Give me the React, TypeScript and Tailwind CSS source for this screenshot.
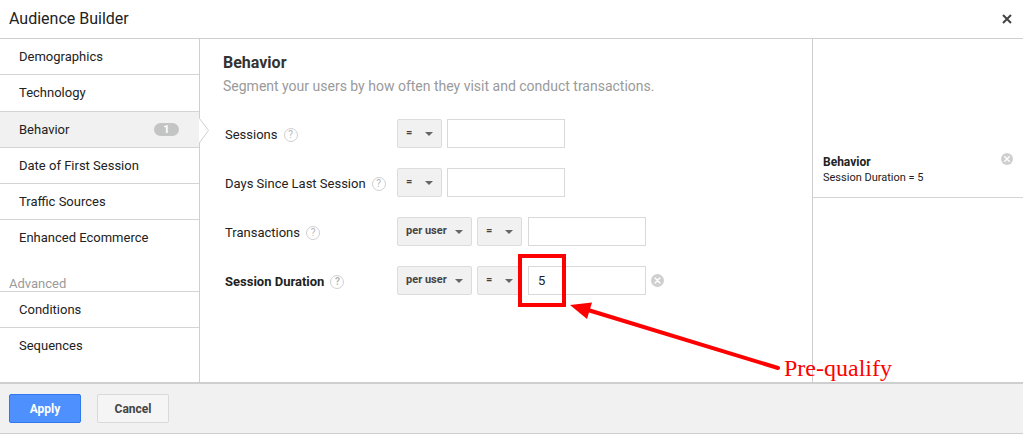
import React from "react";

const font = { fontFamily: "Roboto, 'Liberation Sans', Arial, sans-serif" };

function HelpIcon() {
  return (
    <span className="ml-[6px] inline-flex h-[14px] w-[14px] items-center justify-center rounded-full border border-[#d0d0d0] text-[10px] leading-none text-[#b5b5b5]">
      ?
    </span>
  );
}

function ClearIcon({ size = 13 }: { size?: number }) {
  return (
    <svg width={size} height={size} viewBox="0 0 14 14">
      <circle cx="7" cy="7" r="7" fill="#cfcfcf" />
      <path d="M4.4 4.4 L9.6 9.6 M9.6 4.4 L4.4 9.6" stroke="#fff" strokeWidth="1.6" strokeLinecap="round" />
    </svg>
  );
}

function Select({ label, wide }: { label: string; wide?: boolean }) {
  return (
    <div
      className={`flex h-[29px] items-center justify-between rounded-[2px] border border-[#dcdcdc] bg-[#f1f1f1] pl-[8px] pr-[8px] text-[11px] font-bold text-[#444] ${
        wide ? "w-[75px]" : "w-[45px]"
      }`}
    >
      <span>{label}</span>
      <svg width="8" height="4" viewBox="0 0 8 4">
        <path d="M0 0 L8 0 L4 4 Z" fill="#666" />
      </svg>
    </div>
  );
}

function TextBox({ value }: { value?: string }) {
  return (
    <div className="flex h-[29px] w-[118px] items-center border border-[#d9d9d9] bg-white pl-[9px] text-[13px] text-[#222]">
      {value}
    </div>
  );
}

type Row = { label: string; perUser?: boolean; bold?: boolean; value?: string; clear?: boolean };

const rows: Row[] = [
  { label: "Sessions" },
  { label: "Days Since Last Session" },
  { label: "Transactions", perUser: true },
  { label: "Session Duration", perUser: true, bold: true, value: "5", clear: true },
];

const navTop = [
  "Demographics",
  "Technology",
  "Behavior",
  "Date of First Session",
  "Traffic Sources",
  "Enhanced Ecommerce",
];

export default function App() {
  return (
    <div className="relative flex h-[434px] w-[1023px] flex-col overflow-hidden bg-white text-[#222]" style={font}>
      {/* header */}
      <div className="flex h-[39px] shrink-0 items-center justify-between border-b border-[#cfcfcf] pl-[9px] pr-[11px]">
        <span className="text-[16px] text-[#222]">Audience Builder</span>
        <svg width="10" height="10" viewBox="0 0 10 10">
          <path d="M1 1 L9 9 M9 1 L1 9" stroke="#444" strokeWidth="2" />
        </svg>
      </div>

      {/* body */}
      <div className="flex h-[343px] shrink-0">
        <div className="w-[200px] shrink-0 border-r border-[#cfcfcf]">
          {navTop.map((item, i) => (
            <div
              key={item}
              className={`relative flex items-center justify-between pl-[19px] pr-[20px] text-[13px] ${
                item === "Technology" ? "h-[37px]" : "h-[36px]"
              } ${i < navTop.length - 1 ? "border-b border-[#d4d4d4]" : ""} ${
                item === "Behavior" ? "bg-[#f1f1f1]" : ""
              }`}
            >
              <span>{item}</span>
              {item === "Behavior" && (
                <>
                  <span className="flex h-[13px] w-[25px] items-center justify-center rounded-full bg-[#c4c4c4] text-[11px] font-bold leading-none text-white">
                    1
                  </span>
                  <svg className="absolute right-[-11px] top-[6px]" width="11" height="25" viewBox="0 0 11 25">
                    <path d="M0 0 L9.5 12.5 L0 25 Z" fill="#fff" />
                    <path d="M0.5 0.5 L9.5 12.5 L0.5 24.5" fill="none" stroke="#d0d0d0" strokeWidth="1" />
                  </svg>
                </>
              )}
            </div>
          ))}
          <div className="flex h-[36px] items-end border-b border-[#d4d4d4] pb-[-1px] pl-[9px] text-[13px] leading-[15px] text-[#9a9a9a]">
            Advanced
          </div>
          <div className="flex h-[36px] items-center border-b border-[#d4d4d4] pl-[19px] text-[13px]">Conditions</div>
          <div className="flex h-[36px] items-center pl-[19px] text-[13px]">Sequences</div>
        </div>

        <div className="flex-1 pl-[23px] pt-[14px]">
          <div className="text-[16px] font-bold leading-[20px] text-[#333]">Behavior</div>
          <div className="mt-[3px] text-[14px] leading-[20px] text-[#9a9a9a]">
            Segment your users by how often they visit and conduct transactions.
          </div>
          <div className="mt-[23px] flex flex-col gap-[20px] pl-[2px]">
            {rows.map((r) => (
              <div key={r.label} className="flex items-center">
                <div className={`flex w-[172px] items-center pt-[3px] text-[13px] ${r.bold ? "font-bold" : ""}`}>
                  <span>{r.label}</span>
                  <HelpIcon />
                </div>
                <div className="flex items-center gap-[5px]">
                  {r.perUser && <Select label="per user" wide />}
                  <Select label="=" />
                  <div className={r.perUser ? "ml-[1px]" : ""}>
                    <TextBox value={r.value} />
                  </div>
                  {r.clear && (
                    <span className="flex">
                      <ClearIcon />
                    </span>
                  )}
                </div>
              </div>
            ))}
          </div>
        </div>

        <div className="w-[211px] shrink-0 border-l border-[#cfcfcf] pt-[115px]">
          <div className="flex items-start justify-between border-b border-[#d4d4d4] pb-[11px] pl-[10px] pr-[10px]">
            <div>
              <div className="text-[12px] font-bold leading-[16px] text-[#222]">Behavior</div>
              <div className="text-[11px] leading-[16px] text-[#222]">Session Duration = 5</div>
            </div>
            <span className="mt-[-1px] flex">
              <ClearIcon size={12} />
            </span>
          </div>
        </div>
      </div>

      {/* footer */}
      <div className="flex h-[52px] shrink-0 items-center gap-[16px] border-t-2 border-b border-[#cfcfcf] bg-[#f1f1f1] pl-[9px]">
        <button className="h-[29px] w-[72px] rounded-[2px] border border-[#3079ed] bg-[#4d90fe] text-[12px] font-bold text-white">
          Apply
        </button>
        <button className="h-[29px] w-[72px] rounded-[2px] border border-[#d9d9d9] bg-[#f5f5f5] text-[12px] font-bold text-[#444]">
          Cancel
        </button>
      </div>

      {/* annotation overlay */}
      <svg className="pointer-events-none absolute left-0 top-0" width="1023" height="434" viewBox="0 0 1023 434">
        <rect x="520" y="256" width="44" height="49" fill="none" stroke="#ff0000" strokeWidth="4" />
        <line x1="778" y1="368" x2="588" y2="310" stroke="#ff0000" strokeWidth="4" strokeLinecap="round" />
        <polygon points="570,305 592,302.5 587,319" fill="#ff0000" />
      </svg>
      <div
        className="pointer-events-none absolute left-[784px] top-[353px] text-[24px] leading-[30px] text-[#ff0000]"
        style={{ fontFamily: "'Liberation Serif', 'Times New Roman', serif" }}
      >
        Pre-qualify
      </div>
    </div>
  );
}
